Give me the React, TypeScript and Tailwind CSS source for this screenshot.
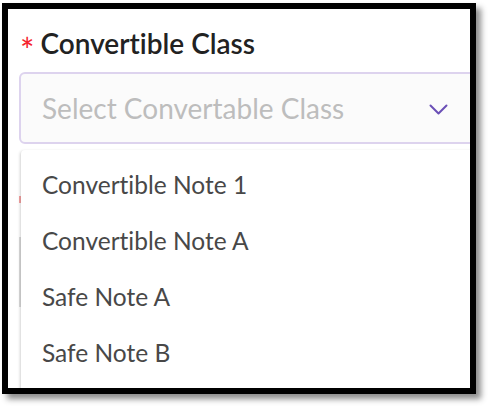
import React from 'react';

const options = ['Convertible Note 1', 'Convertible Note A', 'Safe Note A', 'Safe Note B'];

export default function App() {
  return (
    <div
      className="w-[489px] h-[410px] bg-white overflow-hidden [font-variant-ligatures:none]"
      style={{ fontFamily: 'Lato, "Noto Sans", sans-serif' }}
    >
      <div className="ml-[2px] mt-[3px] w-[474px] h-[391px] border-[6px] border-black shadow-[5px_5px_6px_rgba(0,0,0,0.45)] bg-white">
        <div className="relative w-full h-full overflow-hidden">
          {/* Field */}
          <div className="pt-[19px] pl-[11px]">
            <div className="flex items-center h-[30px] pl-[1px]">
              <span className="text-[#f5222d] text-[34px] leading-none mt-[14px] mr-[6px]">*</span>
              <span className="text-[#222222] text-[28px] font-semibold leading-none">Convertible Class</span>
            </div>
            <div className="mt-[14px] w-[480px] h-[72px] border-2 border-[#ddd3ee] rounded-[6px] bg-[#fbfbfb] flex items-center">
              <span className="ml-[21px] text-[28px] text-[#bdbdbd] leading-none">Select Convertable Class</span>
              <svg className="ml-auto mr-[49px] mt-[2px]" width="19" height="11" viewBox="0 0 19 11" fill="none">
                <path d="M1.5 1.5 L9.5 9.5 L17.5 1.5" stroke="#6a4fb6" strokeWidth="2" strokeLinecap="round" strokeLinejoin="round" />
              </svg>
            </div>
          </div>

          {/* Bits of the fields behind the menu */}
          <span className="absolute left-[11px] top-[187px] w-[2px] h-[7px] bg-[#f6a3a3]" />
          <span className="absolute left-[11px] top-[228px] w-[2px] h-[70px] bg-[#dcdcdc]" />

          {/* Menu */}
          <div className="absolute left-[13px] top-[141px] w-[480px] h-[260px] bg-white shadow-[-1px_1px_3px_rgba(0,0,0,0.18)] rounded-[4px] pt-[7px]">
            {options.map((o) => (
              <div key={o} className="h-[56px] flex items-center pl-[21px] text-[24.5px] text-[#484848]">
                {o}
              </div>
            ))}
          </div>
        </div>
      </div>
    </div>
  );
}
